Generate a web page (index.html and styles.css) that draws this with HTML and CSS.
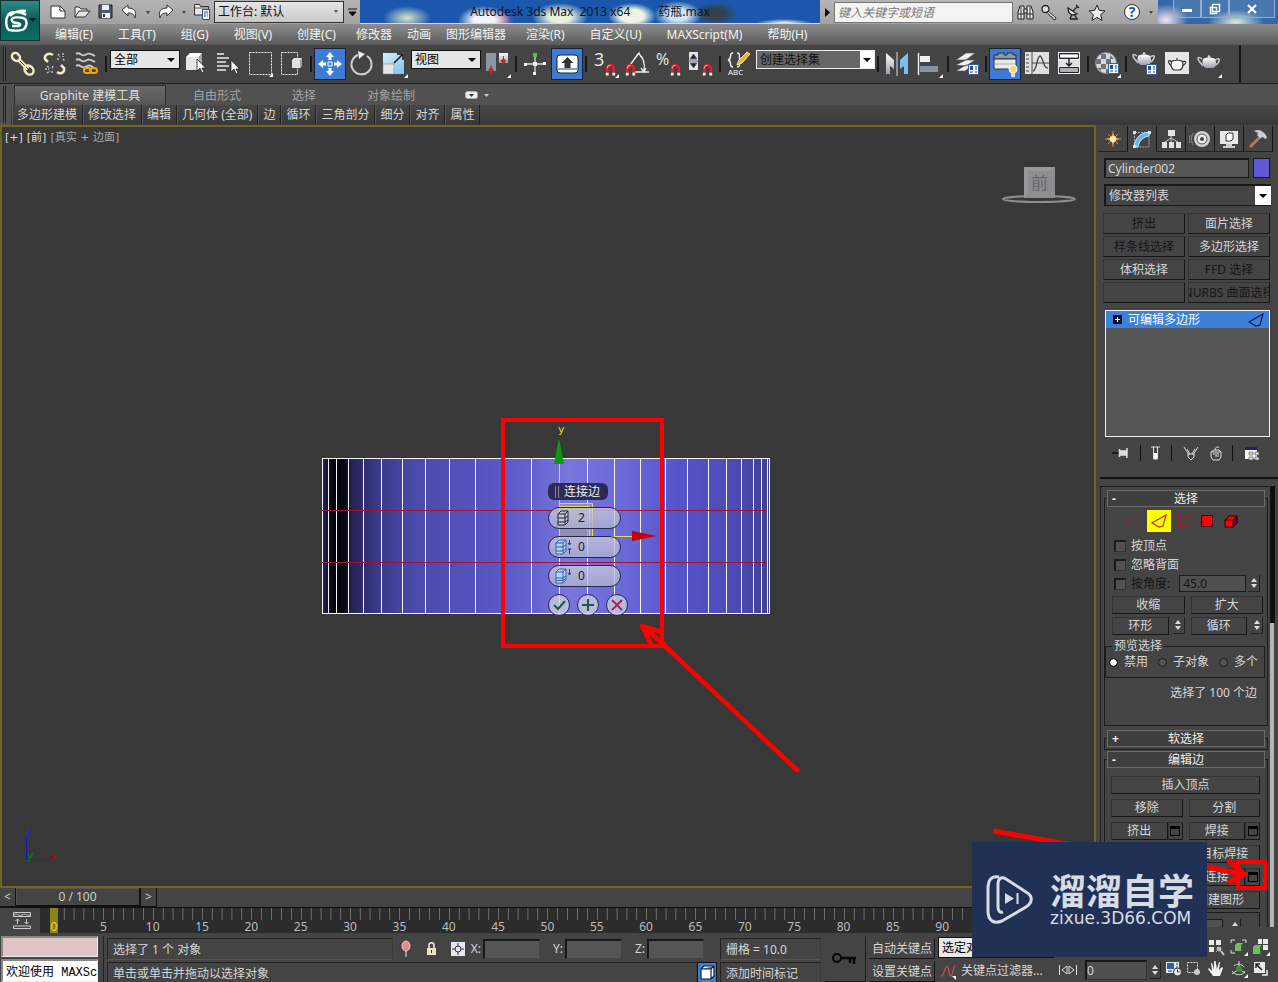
FILE: index.html
```html
<!DOCTYPE html>
<html lang="zh-CN">
<head>
<meta charset="utf-8">
<title>Autodesk 3ds Max 2013 x64 药瓶.max</title>
<link rel="stylesheet" href="styles.css">
</head>
<body>
<svg class="defs" aria-hidden="true">
  <defs>
    <linearGradient id="steel" x1="0" y1="0" x2="0" y2="1"><stop offset="0" stop-color="#fff"/><stop offset="1" stop-color="#9aa0a8"/></linearGradient>
    <linearGradient id="sky" x1="0" y1="0" x2="1" y2="1"><stop offset="0" stop-color="#d6f0fb"/><stop offset="1" stop-color="#7cc4ea"/></linearGradient>
    <symbol id="magnet" viewBox="0 0 10 12"><path d="M2 9V5a3 3 0 0 1 6 0v4" fill="none" stroke="#d3232b" stroke-width="2.6"/><path d="M2 5a3 3 0 0 1 3-3" fill="none" stroke="#f59a9a"/><path d="M.7 9h2.6v2.5H.7zM6.7 9h2.6v2.5H6.7z" fill="#f4f4f4"/></symbol>
    <symbol id="cursor" viewBox="0 0 10 16"><path d="M1 1v12l3-3 2 5 2-1-2-4h3.500z" fill="#fff" stroke="#222" stroke-width=".8"/></symbol>
    <symbol id="flyout" viewBox="0 0 4 4"><path d="M4 0v4H0z" fill="#fff"/></symbol>
    <symbol id="teapot" viewBox="0 0 24 16"><path d="M5 5C1 2 0 4 2 7l4 5M18 6c5-3 6 0 1 5" fill="none" stroke="#c6cacd" stroke-width="1.500"/><path d="M6 5c2-2 10-2 12 0 2 5 1 8-2 9H9C5 12 5 8 6 5z" fill="url(#steel)"/><circle cx="12" cy="2.500" r="1.300" fill="#ddd"/></symbol>
    <symbol id="dialog" viewBox="0 0 11 11"><path d="M.5.5h10v10H.5z" fill="#f5f8fb" stroke="#3c5f8a"/><path d="M2 2h3v4H2z" fill="#1e5296"/><path d="M7 3h2M7 5h2M2 8h3M7 8h2" stroke="#1e5296"/></symbol>
    <symbol id="spin" viewBox="0 0 8 12"><path d="M1 5l3-4 3 4zM1 7l3 4 3-4z" fill="#ddd"/></symbol>
    <symbol id="win" viewBox="0 0 12 12"><path d="M1.500 1.500h9v9h-9z" fill="none" stroke="#000"/><path d="M1 1h10v3H1z" fill="#000"/></symbol>
    <symbol id="edge" viewBox="0 0 16 14"><path d="M1 9L15 1l-3 11-4 1z" fill="none" stroke="currentColor" stroke-width="1.200"/></symbol>
  </defs>
</svg>

<header class="titlebar">
  <button class="appbtn" aria-label="应用程序菜单"><svg width="40" height="41" viewBox="0 0 40 41"><path d="M26 15c-5-4-15-4-18 0-3 5-2 13 1 15 5 1 13 1 15-1 4-4 3-10-1-11-3-1-10-1-11 1-1 3 2 4 5 4 4 0 4 3 1 3h-6M10 16c3-4 10-6 16-5" fill="none" stroke="#fff" stroke-width="2.400"/><path d="M29 18h7l-3.500 4z" fill="#05211f"/></svg></button>
  <div class="quick">
    <button aria-label="新建"><svg width="18" height="16"><path d="M2 2h9l5 5v7H2z" fill="#fff" stroke="#333"/><path d="M11 2v5h5" fill="none" stroke="#333"/></svg></button>
    <button aria-label="打开"><svg width="18" height="16"><path d="M2 13V3h4l2 2h6v2" fill="#eee" stroke="#333"/><path d="M2 13L6 7h11l-5 6z" fill="#e4e8ed" stroke="#333"/></svg></button>
    <button aria-label="保存"><svg width="18" height="16"><path d="M2 1h13v13H2z" fill="#4d5868" stroke="#222"/><path d="M5 1h7v5H5zM5 9h8v5H5z" fill="#eef"/><path d="M6 10h2v3H6z" fill="#333"/></svg></button>
    <button aria-label="撤消"><svg width="18" height="16"><path d="M1 6l6-5v3c6 0 9 3 7 10-1-4-3-5-7-5v3z" fill="#fff" stroke="#333"/></svg></button>
    <i class="tri tiny"></i>
    <button aria-label="重做"><svg width="18" height="16"><path d="M16 6l-6-5v3c-6 0-9 3-7 10 1-4 3-5 7-5v3z" fill="#fff" stroke="#333"/></svg></button>
    <i class="tri tiny"></i>
    <button aria-label="项目文件夹"><svg width="18" height="18"><path d="M1.500 12V1.500h5l1 2h8V12z" fill="#e7e9ec" stroke="#333"/><path d="M1 5h14" stroke="#555"/><path d="M9.500 6.500h7v10h-7z" fill="#f7fbff" stroke="#26508a"/><path d="M11 9h4M11 11h2M14 11h1M11 13h2M14 13h1" stroke="#26508a"/></svg></button>
  </div>
  <span class="drop workspace"><select aria-label="工作台"><option>工作台: 默认</option></select></span>
  <button class="more" aria-label="更多"><svg width="9" height="9"><path d="M0 1h9M1 4h7L4.500 8z" stroke="#111" fill="#111"/></svg></button>
  <h1 class="caption"><span>Autodesk 3ds Max&nbsp; 2013 x64</span><span>药瓶.max</span></h1>
  <div class="info">
    <svg width="6" height="9"><path d="M0 0v9l5-4.500z" fill="#000"/></svg>
    <input class="search" type="search" aria-label="搜索" placeholder="键入关键字或短语">
    <button aria-label="查找"><svg width="17" height="17"><path d="M1 15V8l2-6h4v13zM10 15V2h4l2 6v7z" fill="#eee" stroke="#222"/><path d="M7 5h3v4H7zM1 10h6M10 10h6M4 3v12M13 3v12" fill="#ddd" stroke="#222"/></svg></button>
    <button aria-label="订阅"><svg width="18" height="17"><circle cx="5.500" cy="5" r="3.500" fill="#ddd" stroke="#222" stroke-width="1.300"/><path d="M8 7l8 7-1 2-2-1-1-2-2-1-3-4z" fill="#eee" stroke="#222"/></svg></button>
    <button aria-label="通讯中心"><svg width="16" height="17"><path d="M3 4c0 6 4 8 9 6zM5 15h8M7 10l-2 5M9 10l3 5M8 7l5-5M11 1l3 3" fill="#eee" stroke="#222" stroke-width="1.300"/></svg></button>
    <button aria-label="收藏夹"><svg width="18" height="17"><path d="M9 1l2.300 5.400 5.700.5-4.300 3.800 1.300 5.700L9 13.400l-5 3 1.300-5.700L1 6.900l5.700-.5z" fill="#eee" stroke="#222"/></svg></button>
    <button class="help" aria-label="帮助"><svg width="18" height="18"><circle cx="9" cy="9" r="7.500" fill="#f5f7fa" stroke="#333"/><text x="9" y="14" text-anchor="middle" class="qmark">?</text></svg></button>
    <i class="tri tiny"></i>
  </div>
  <div class="winbtns">
    <button aria-label="最小化"><svg width="12" height="12"><path d="M1 6h10v3H1z" fill="#fff"/></svg></button>
    <button aria-label="还原"><svg width="12" height="12"><path d="M3.500 1.500h7v7h-7zM1.500 4.500h6v6h-6z" fill="#3568a8" stroke="#fff" stroke-width="1.500"/></svg></button>
    <button class="close" aria-label="关闭"><svg width="12" height="12"><path d="M2 2l8 8M10 2l-8 8" stroke="#fff" stroke-width="2.200"/></svg></button>
  </div>
</header>

<nav class="menubar">
  <button>编辑(E)</button><button>工具(T)</button><button>组(G)</button><button>视图(V)</button><button>创建(C)</button><button class="short">修改器</button><button class="short">动画</button><button class="short">图形编辑器</button><button>渲染(R)</button><button>自定义(U)</button><button>MAXScript(M)</button><button>帮助(H)</button>
</nav>

<div class="toolbar">
  <i class="grip"></i>
  <button aria-label="选择并链接"><svg width="28" height="28"><path d="M9 9l10 10" stroke="#eee0ad" stroke-width="4"/><path d="M9 9l10 10" stroke="#4b4533"/><ellipse cx="7" cy="7" rx="4.500" ry="3.500" transform="rotate(45 7 7)" fill="none" stroke="#f1e9c8" stroke-width="2.500"/><ellipse cx="20" cy="20" rx="5" ry="4" transform="rotate(45 20 20)" fill="none" stroke="#f1e9c8" stroke-width="2.500"/></svg></button>
  <button aria-label="断开链接"><svg width="28" height="28"><path d="M12 5C8 2 3 5 4 9l3 3M16 22c4 3 8 0 7-4l-3-3" fill="none" stroke="#f1e9c8" stroke-width="2.500"/><path d="M17 4l2 3M22 3v4M16 9h3M22 9l2 2M4 19h4M6 16l3 2M6 23l3-2M11 21v3M12 16l-1 3" stroke="#bbb" stroke-width="1.500" stroke-dasharray="2 1"/></svg></button>
  <button aria-label="绑定到空间扭曲"><svg width="28" height="28"><path d="M3 4c4-3 5 3 9 1s5-2 10 1M3 10c4-3 5 3 9 1s5-2 10 1M3 16c4-3 5 3 9 1s5-2 8 0" fill="none" stroke="#c9cccf" stroke-width="1.800"/><rect x="11" y="18" width="7" height="5" rx="2.500" fill="#444" stroke="#f6a800" stroke-width="2"/><rect x="17" y="18" width="7" height="5" rx="2.500" fill="none" stroke="#f6a800" stroke-width="2"/></svg></button>
  <i class="sep"></i>
  <span class="drop filter"><select aria-label="选择过滤器"><option>全部</option></select></span>
  <button aria-label="选择对象"><svg width="28" height="28"><path d="M4 7l4-4h12l-3 4z" fill="#fff"/><path d="M4 7h13v13H4z" fill="#e4e7ea"/><path d="M17 7l3-4v13l-3 4z" fill="#9ea4aa"/><use href="#cursor" x="14" y="8" width="10" height="16"/></svg></button>
  <button aria-label="按名称选择"><svg width="28" height="28"><path d="M3 4h7M3 8h12M3 12h9M3 16h12M3 20h9" stroke="#eee" stroke-width="1.500"/><use href="#cursor" x="16" y="9" width="10" height="16"/></svg></button>
  <button aria-label="矩形选择区域"><svg width="28" height="28"><path d="M3.500 2.500h22v22h-22z" fill="none" stroke="#eee" stroke-dasharray="2 1"/><use href="#flyout" x="23" y="23" width="4" height="4"/></svg></button>
  <button aria-label="窗口/交叉"><svg width="28" height="28"><path d="M3.500 2.500h16v22h-16z" fill="none" stroke="#eee" stroke-dasharray="2 1"/><path d="M14 10l2-2h8v8l-2 2h-8z" fill="#dfe2e5"/><path d="M22 10l2-2v8l-2 2z" fill="#9aa0a6"/></svg></button>
  <i class="sep"></i>
  <button class="on" aria-label="选择并移动"><svg width="28" height="28"><path d="M12 12h4v4h-4z" fill="none" stroke="#fff"/><path d="M14 2l4 5h-2.500v3h-3V7H10zM14 26l4-5h-2.500v-3h-3v3H10zM2 14l5-4v2.500h3v3H7V18zM26 14l-5-4v2.500h-3v3h3V18z" fill="#fff"/></svg></button>
  <button aria-label="选择并旋转"><svg width="28" height="28"><path d="M19 6A10 10 0 1 1 10 5" fill="none" stroke="#cfd2d5" stroke-width="2"/><path d="M10 1l7 3-6 5z" fill="#eee"/></svg></button>
  <button aria-label="选择并缩放"><svg width="28" height="28"><path d="M3 3h21v21H3z" fill="url(#sky)"/><path d="M3 14h11v10H3z" fill="#e4e6e8" stroke="#888" stroke-width=".6"/><path d="M14 13l8-8M17 4h6v6" fill="none" stroke="#111" stroke-width="1.500"/><use href="#flyout" x="24" y="24" width="4" height="4"/></svg></button>
  <span class="drop filter"><select aria-label="参考坐标系"><option>视图</option></select></span>
  <button aria-label="使用轴点中心"><svg width="28" height="28"><path d="M3 3h10v18H3z" fill="#8d97a4"/><path d="M16 3h9v10h-9z" fill="url(#steel)"/><path d="M8 17l3 3-3 3-3-3zM20.500 8l3 3-3 3-3-3z" fill="#c2272b"/><path d="M8 15v9M20.500 6v9" stroke="#c2272b"/><use href="#flyout" x="24" y="24" width="4" height="4"/></svg></button>
  <i class="sep"></i>
  <button aria-label="选择并操纵"><svg width="28" height="28"><path d="M14 4v20M4 14h20" stroke="#ddd" stroke-width="1.300"/><path d="M12 12h4v4h-4zM3 13h3v3H3zM22 12h3v3h-3zM12 22h3v3h-3z" fill="#f4f4f4"/><path d="M12 3h4v4h-4z" fill="#62b84a"/></svg></button>
  <button class="on" aria-label="键盘快捷键覆盖切换"><svg width="28" height="28"><rect x="4" y="5" width="21" height="18" rx="3" fill="#fff" stroke="#222"/><path d="M5 19h19" stroke="#8ba2bd" stroke-width="2"/><path d="M14.500 7l6 6h-3v5h-6v-5h-3z" fill="#333"/></svg></button>
  <i class="sep"></i>
  <button aria-label="捕捉开关"><svg width="28" height="28"><text x="3" y="16" class="glyph">3</text><use href="#magnet" x="14" y="13" width="11" height="13"/><use href="#flyout" x="24" y="24" width="4" height="4"/></svg></button>
  <button aria-label="角度捕捉"><svg width="28" height="28"><path d="M5 18L15 4M10 22h16M16 4c5 4 6 10 5 17M13 7l3-4 2 4M18 18l3 4 2-4" fill="none" stroke="#eee" stroke-width="1.300"/><use href="#magnet" x="2" y="13" width="11" height="13"/></svg></button>
  <button aria-label="百分比捕捉"><svg width="28" height="28"><text x="1" y="15" class="glyph small">%</text><use href="#magnet" x="15" y="13" width="11" height="13"/></svg></button>
  <button aria-label="微调器捕捉"><svg width="28" height="28"><path d="M2 2h9v18H2z" fill="#dfe4ea"/><path d="M2 11h9M3 9l3.500-5L10 9zM3 13l3.500 5 3.500-5z" fill="#222" stroke="#667"/><use href="#magnet" x="15" y="13" width="11" height="13"/></svg></button>
  <i class="sep"></i>
  <button aria-label="编辑命名选择集"><svg width="28" height="28"><path d="M8 3C3 3 8 9 3 10c5 1 0 7 5 7M12 3c5 0 0 6 4 7-4 1 1 7-4 7" fill="none" stroke="#eee" stroke-width="1.400"/><path d="M12 15l2-5 8-8 3 2-8 9z" fill="#f1b52b" stroke="#fbe6a5"/><text x="3" y="25" class="abc">ABC</text></svg></button>
  <span class="drop named"><select aria-label="命名选择集"><option>创建选择集</option></select></span>
  <i class="sep"></i>
  <button aria-label="镜像"><svg width="28" height="28"><path d="M3 3l8 7v9l-4-3v8H3z" fill="url(#steel)"/><path d="M25 3l-8 7v9l4-3v8h4z" fill="#7bc3e6"/><path d="M14 2v24" stroke="#ddd"/></svg></button>
  <button aria-label="对齐"><svg width="28" height="28"><path d="M3.500 3v22" stroke="#eee" stroke-width="1.500"/><path d="M5 6h10v6H5z" fill="#f2f2f2"/><path d="M5 16h18v6H5z" fill="#8993a1"/><use href="#flyout" x="24" y="24" width="4" height="4"/></svg></button>
  <i class="sep"></i>
  <button aria-label="层管理器"><svg width="28" height="28"><path d="M3 10l10-7h9l-9 7zM3 15l10-5h9l-9 6zM3 21l10-6h7l-8 6z" fill="#f1f1f1" stroke="#555" stroke-width=".7"/><use href="#dialog" x="15" y="14" width="11" height="11"/></svg></button>
  <i class="sep"></i>
  <button class="on" aria-label="功能区"><svg width="28" height="28"><path d="M3 9V5h4V3h6v2h3V3h6v2h3v4z" fill="#8d99a6" stroke="#333"/><path d="M3 9h22v10H3z" fill="#e8ebee" stroke="#333"/><path d="M4 14h20" stroke="#aab"/><circle cx="22" cy="19" r="4" fill="#ffd76b" stroke="#fff"/><path d="M20 23h4v4h-4z" fill="#ddd"/></svg></button>
  <button aria-label="曲线编辑器"><svg width="28" height="28"><path d="M2 2h24v22H2z" fill="#dfe1e3"/><path d="M9 2v22M3 5h3M3 9h3M3 13h3M3 17h3M3 21h3M9 13h17" stroke="#444"/><path d="M10 21c4-1 4-15 7-15s3 13 8 12" fill="none" stroke="#444" stroke-width="1.300"/></svg></button>
  <button aria-label="图解视图"><svg width="28" height="28"><path d="M3 2h22v22H3z" fill="#f0f0f0"/><path d="M4.500 3.500h19v5h-19zM4.500 17.500h19v5h-19z" fill="#a9b0b8" stroke="#222"/><path d="M5 5h18v2H5z" fill="#fff"/><path d="M3 10h22v6H3z" fill="#dfe2e5"/><path d="M14 9v7M11 13l3 3 3-3" fill="none" stroke="#222" stroke-width="1.500"/></svg></button>
  <i class="sep"></i>
  <button aria-label="材质编辑器"><svg width="28" height="28"><circle cx="13" cy="13" r="10.500" fill="#d6d9dc" stroke="#888"/><path d="M8 4h5v5H8zM17 5l4 4h-4zM3 9h5v5H3zM13 9h5v5h-5zM8 14h5v5H8zM18 14h5v4h-5zM4 18h4v3zM13 19h5v4h-5z" fill="#6d747c"/><use href="#dialog" x="15" y="13" width="11" height="11"/><use href="#flyout" x="24" y="24" width="4" height="4"/></svg></button>
  <i class="sep"></i>
  <button aria-label="渲染设置"><svg width="28" height="28"><use href="#teapot" x="1" y="1" width="24" height="16"/><use href="#dialog" x="15" y="14" width="11" height="11"/></svg></button>
  <button aria-label="渲染帧窗口"><svg width="28" height="28"><path d="M2 2h24v22H2z" fill="#e4e6e8"/><path d="M9 11c2-1 8-1 10 0 2 4 1 7-2 9h-6c-3-2-4-5-2-9zM9 12c-4-3-5-1-1 4M19 12c5-2 5 1 0 4M14 8v2" fill="#f8f8f8" stroke="#333" stroke-width="1.200"/></svg></button>
  <button aria-label="渲染产品"><svg width="28" height="28"><use href="#teapot" x="2" y="4" width="24" height="16"/><use href="#flyout" x="23" y="24" width="4" height="4"/></svg></button>
</div>

<section class="ribbon">
  <i class="grip"></i>
  <div class="ribbonbody">
    <div class="tabs"><button class="active">Graphite 建模工具</button><button>自由形式</button><button>选择</button><button>对象绘制</button><svg width="24" height="9"><rect x=".5" y=".5" width="12" height="7" rx="2" fill="#eee" stroke="#aaa"/><path d="M4 3h5L6.500 6z" fill="#333"/><path d="M19 3h5l-2.500 3z" fill="#ccc"/></svg></div>
    <div class="panels"><button>多边形建模</button><button>修改选择</button><button>编辑</button><button>几何体 (全部)</button><button>边</button><button>循环</button><button>三角剖分</button><button>细分</button><button>对齐</button><button>属性</button></div>
  </div>
</section>

<main class="workspace-grid">
  <div class="left">
    <section class="viewport">
      <div class="vplabel"><span>[+]</span><span>[前]</span><span class="dim">[真实 + 边面]</span></div>
      <svg class="scene" aria-label="前视图">
        <defs><linearGradient id="body"><stop offset="0" stop-color="#2b2957"/><stop offset=".015" stop-color="#101022"/><stop offset=".03" stop-color="#020204"/><stop offset=".05" stop-color="#080814"/><stop offset=".065" stop-color="#242150"/><stop offset=".12" stop-color="#3a3886"/><stop offset=".2" stop-color="#4b49a9"/><stop offset=".36" stop-color="#5754bf"/><stop offset=".47" stop-color="#6462cd"/><stop offset=".55" stop-color="#7876dc"/><stop offset=".68" stop-color="#6a68d8"/><stop offset=".8" stop-color="#5553c8"/><stop offset=".92" stop-color="#4d4bb6"/><stop offset="1" stop-color="#403e92"/></linearGradient></defs>
        <g transform="translate(-2 -127)">
          <path d="M322 458h448v155H322z" fill="url(#body)"/>
          <path d="M322 458.500h448M322 613.500h448M322.500 458v155M328.500 458v155M336.500 458v155M348.500 458v155M363.500 458v155M381.500 458v155M402.500 458v155M425.500 458v155M449.500 458v155M475.500 458v155M502.500 458v155M531.500 458v155M559.500 536v77M587.500 458v155M614.500 458v155M640.500 458v155M665.500 458v155M687.500 458v155M708.500 458v155M726.500 458v155M741.500 458v155M753.500 458v155M761.500 458v155M767.500 458v155M769.500 458v155" stroke="#f4f4ff" fill="none"/>
          <path d="M321 510.500h446M321 562.500h446" stroke="#a01235"/>
          <path d="M559 503h34v33h-34z" fill="#9a98a0" opacity=".75"/>
          <path d="M559.500 464v72M559 503.500h33.500v33M560 506.500h29.500v30M593 536.500h40" stroke="#e4dc55" fill="none"/>
          <path d="M559 438l5 26h-10z" fill="#0a9a0a"/><path d="M632 531l25 5-25 5z" fill="#c40000"/>
          <text x="558" y="433" class="ax" fill="#dede28">y</text>
          <path d="M503 420h159v226H503z" fill="none" stroke="#fe0000" stroke-width="4"/>
          <path d="M797 770L650 632M642 626l20 6M642 626l10 20M642 626l22 18" fill="none" stroke="#fe0000" stroke-width="4.500" stroke-linecap="round"/>
        </g>
      </svg>
      <form class="caddy">
        <div class="caddytitle"><i></i>连接边</div>
        <label class="pill"><svg width="20" height="18"><path d="M4 5l3-3h7v11l-3 3H4zM4 5h7l3-3M11 5v11M4 9h7l3-2M4 13h7l3-2" fill="#d5e5fb" fill-opacity=".4" stroke="#222"/></svg><input aria-label="分段" value="2"></label>
        <label class="pill"><svg width="20" height="18"><path d="M2 5l3-3h7v11l-3 3H2zM2 5h7l3-3M9 5v11M2 9h7l3-2M2 13h7l3-2" fill="#b5dafd" stroke="#3161a6"/><path d="M15.500 2v5M14 5l1.500 2L17 5M15.500 16v-5M14 12l1.500-2 1.500 2" fill="none" stroke="#1f478b"/></svg><input aria-label="收缩" value="0"></label>
        <label class="pill"><svg width="20" height="18"><path d="M2 5l3-3h7v11l-3 3H2zM2 5h7l3-3M9 5v11M2 11h7l3-2M2 13.500h7l3-2" fill="#b5dafd" stroke="#3161a6"/><path d="M15.500 2v6M14 6l1.500 2L17 6" fill="none" stroke="#1f478b"/></svg><input aria-label="滑块" value="0"></label>
        <div class="caddybtns"><button type="button" aria-label="确定"><svg width="14" height="14"><path d="M2 7l4 4 7-8" fill="none" stroke="#1d5a3a" stroke-width="2"/></svg></button><button type="button" aria-label="应用并继续"><svg width="14" height="14"><path d="M7 1v12M1 7h12" stroke="#1d5a3a" stroke-width="2"/></svg></button><button type="button" aria-label="取消"><svg width="14" height="14"><path d="M2 2l10 10M12 2L2 12" stroke="#a2285a" stroke-width="2"/></svg></button></div>
      </form>
      <svg class="cube" width="78" height="42"><ellipse cx="38" cy="33" rx="36" ry="3" fill="none" stroke="#8b8e90" stroke-width="2"/><path d="M23 1h31v31H23z" fill="#8c8e90"/><path d="M23 1h31l-4 4H27v23l-4 4z" fill="#a0a2a4" opacity=".5"/><text x="30" y="23" class="cubetext">前</text></svg>
      <svg class="axes" width="40" height="40"><path d="M4.500 14v22" stroke="#1414b4"/><path d="M4 35.500h24" stroke="#a80000"/><text x="4" y="11" class="ax" fill="#2222dd">z</text><text x="5" y="35" class="ax" fill="#008a00">y</text><text x="28" y="36" class="ax" fill="#b80000">x</text></svg>
    </section>
    <div class="slider"><button aria-label="上一帧">&lt;</button><button class="thumb">0 / 100</button><button aria-label="下一帧">&gt;</button></div>
    <div class="trackbar">
      <button class="curvebtn" aria-label="打开迷你曲线编辑器"><svg width="18" height="17"><path d="M.5.5h17v4H.5zM.5 14h17v2.500H.500zM1 3c4-3 4 2 8 0s4 1 8 0M4.500 7v5M2.500 9l2-2 2 2M13.500 7v5M11.500 10l2 2 2-2" fill="none" stroke="#ccc"/></svg></button>
      <div class="ticks">
        <div class="first"><span>0</span></div><div><span>5</span></div><div><span>10</span></div><div><span>15</span></div><div><span>20</span></div><div><span>25</span></div><div><span>30</span></div><div><span>35</span></div><div><span>40</span></div><div><span>45</span></div><div><span>50</span></div><div><span>55</span></div><div><span>60</span></div><div><span>65</span></div><div><span>70</span></div><div><span>75</span></div><div><span>80</span></div><div><span>85</span></div><div><span>90</span></div><div><span>95</span></div>
      </div>
    </div>
  </div>

  <aside class="command">
    <div class="cmdtabs">
      <button aria-label="创建"><svg width="20" height="20"><path d="M10 2v16M2 10h16M5 5l10 10M15 5L5 15" stroke="#e08a2e"/><path d="M10 4l2 4 4 2-4 2-2 4-2-4-4-2 4-2z" fill="#f5a742"/><circle cx="10" cy="10" r="3" fill="#fff1c0"/></svg></button>
      <button class="sel" aria-label="修改"><svg width="22" height="20"><path d="M3.500 18V3.500H18V18z" fill="none" stroke="#aaa" stroke-dasharray="2 1"/><path d="M3 18C4 9 9 4 18 3v4c-6 1-10 5-11 11z" fill="#64b5ea" stroke="#c4ebff"/><path d="M2 2h3v3H2zM2 16h3v3H2zM17 2h3v3h-3z" fill="#ddd"/></svg></button>
      <button aria-label="层次"><svg width="20" height="20"><path d="M7 1h7v6H7zM1 13h5v6H1zM8 13h5v6H8zM15 13h5v6h-5z" fill="#e1e3e6"/><path d="M10 7v6M10 9l-6 4M10 9l7 4" stroke="#ccc"/></svg></button>
      <button aria-label="运动"><svg width="22" height="20"><circle cx="13" cy="10" r="8" fill="#cfd2d5"/><circle cx="13" cy="10" r="5" fill="#e9ebed" stroke="#555"/><circle cx="13" cy="10" r="2" fill="#444"/><path d="M4 4c-2 4-2 8 0 12M1 6c-1 3-1 5 0 8" fill="none" stroke="#888"/></svg></button>
      <button aria-label="显示"><svg width="20" height="20"><path d="M1 2h18v13H1z" fill="#e6e8ea"/><path d="M7 15h6v2h3v2H4v-2h3z" fill="#ccc"/><path d="M7 6l2-2h5v6l-2 2H7z" fill="#fff" stroke="#333"/></svg></button>
      <button aria-label="实用程序"><svg width="20" height="20"><path d="M2 18L13 7" stroke="#b47768" stroke-width="3"/><path d="M6 2c4-2 8-1 12 4l1 3-2 1-2-2-3 1-3-3 1-2z" fill="#c8ccd0"/></svg></button>
    </div>
    <div class="namerow"><input aria-label="对象名称" value="Cylinder002"><button aria-label="对象颜色"></button></div>
    <span class="drop modlist"><select aria-label="修改器列表"><option>修改器列表</option></select></span>
    <div class="modbtns"><button disabled>挤出</button><button>面片选择</button><button disabled>样条线选择</button><button>多边形选择</button><button>体积选择</button><button disabled>FFD 选择</button><button disabled aria-label="空"></button><button disabled>NURBS 曲面选择</button></div>
    <div class="stack"><div class="stackrow"><svg width="9" height="9"><path d="M0 0h9v9H0z" fill="#081030"/><path d="M2 4.500h5M4.500 2v5" stroke="#fff"/></svg><span>可编辑多边形</span><svg class="edgeicon" width="16" height="14"><use href="#edge"/></svg></div></div>
    <div class="stacktools">
      <button aria-label="锁定堆栈"><svg width="17" height="12"><path d="M0 6h7" stroke="#111" stroke-width="1.500"/><path d="M7.500 2v8M15 1v10M8 4h6v4H8z" fill="#ddd" stroke="#ddd" stroke-width="1.500"/></svg></button><i></i>
      <button aria-label="显示最终结果"><svg width="9" height="14"><path d="M0 1h9M2.500 1v12h4V1" fill="none" stroke="#ddd"/><path d="M3 7h3v6H3z" fill="#fff"/></svg></button><i></i>
      <button aria-label="使唯一"><svg width="16" height="15"><path d="M1 1l5 8M15 1l-5 8M4 3l3 5M12 3L9 8M5 8h6v3l-3 3-3-3z" fill="none" stroke="#ddd"/></svg></button>
      <button aria-label="移除修改器"><svg width="12" height="15"><path d="M1 6h10v5l-2 3H3l-2-3zM1 6l3-2h5l2 2M5 4c0-3 3-4 4-2M3 8h6M5 10h4" fill="none" stroke="#ddd"/></svg></button><i></i>
      <button aria-label="配置修改器集"><svg width="16" height="15"><path d="M1 1h12v12H1z" fill="#fff"/><path d="M1 1h12v3H1z" fill="#1b1b9a"/><path d="M5 6h4v3H5zM11 6h4v3h-4zM5 11h4v3H5zM11 11h4v3h-4z" fill="#ddd" stroke="#555" stroke-width=".7"/></svg></button>
    </div>
    <div class="rollarea">
      <div class="rolls">
        <section class="rollout">
          <h2><b>-</b>选择</h2>
          <div class="subobj">
            <button aria-label="顶点"><svg width="14" height="14"><path d="M1 7h2M5 12h2M7 4h2M11 1h2M11 9h2" stroke="#b51c1c" stroke-width="1.500"/></svg></button>
            <button class="sel" aria-label="边"><svg width="16" height="14"><use href="#edge"/></svg></button>
            <button aria-label="边界"><svg width="14" height="14"><path d="M3 2c4-2 9 0 9 5s-5 7-9 5c-2-1-2-3 1-4 1-1 1-2-1-3s-1-2 0-3z" fill="none" stroke="#a31b1b" stroke-width="1.500"/></svg></button>
            <button aria-label="多边形"><svg width="12" height="12"><path d="M.500.500h11v11H.5z" fill="#f00" stroke="#400"/></svg></button>
            <button aria-label="元素"><svg width="14" height="13"><path d="M1 5l4-4h8v7l-4 4H1z" fill="#f00" stroke="#300"/><path d="M9 5l4-4v7l-4 4z" fill="#700050" stroke="#300"/><path d="M1 5h8" stroke="#300"/></svg></button>
          </div>
          <label class="check"><input type="checkbox">按顶点</label>
          <label class="check"><input type="checkbox">忽略背面</label>
          <div class="anglerow"><label class="check off"><input type="checkbox" disabled>按角度:</label><input class="angle" aria-label="角度" value="45.0" disabled><button class="spin" aria-label="调整角度"><svg width="8" height="12"><use href="#spin"/></svg></button></div>
          <div class="pair"><button class="btn">收缩</button><button class="btn">扩大</button></div>
          <div class="pair"><div class="combo"><button class="btn">环形</button><button class="spin" aria-label="调整环形"><svg width="8" height="12"><use href="#spin"/></svg></button></div><div class="combo"><button class="btn">循环</button><button class="spin" aria-label="调整循环"><svg width="8" height="12"><use href="#spin"/></svg></button></div></div>
          <fieldset><legend>预览选择</legend><label><input type="radio" name="preview" checked>禁用</label><label><input type="radio" name="preview">子对象</label><label><input type="radio" name="preview">多个</label></fieldset>
          <p class="count">选择了 100 个边</p>
        </section>
        <section class="rollout closed"><h2><b>+</b>软选择</h2></section>
        <section class="rollout edges">
          <h2><b>-</b>编辑边</h2>
          <button class="btn">插入顶点</button>
          <div class="pair"><button class="btn">移除</button><button class="btn">分割</button></div>
          <div class="pair"><div class="combo tight"><button class="btn">挤出</button><button class="btn set" aria-label="挤出设置"><svg width="12" height="12"><use href="#win"/></svg></button></div><div class="combo tight"><button class="btn">焊接</button><button class="btn set" aria-label="焊接设置"><svg width="12" height="12"><use href="#win"/></svg></button></div></div>
          <div class="pair"><button class="btn" aria-label="桥"></button><button class="btn">目标焊接</button></div>
          <div class="pair"><button class="btn" aria-label="切角"></button><div class="combo tight"><button class="btn">连接</button><button class="btn set" aria-label="连接设置"><svg width="12" height="12"><use href="#win"/></svg></button></div></div>
          <button class="btn shape">创建图形</button>
          <div class="weight"><input aria-label="权重"><button class="spin" aria-label="调整权重"><svg width="8" height="12"><use href="#spin"/></svg></button></div>
        </section>
      </div>
      <div class="scrollbar"><i></i></div>
    </div>
  </aside>
</main>

<footer class="status">
  <div class="listener"><output aria-label="宏录制器"></output><input aria-label="侦听器" value="欢迎使用 MAXScript"></div>
  <div class="prompts">
    <div class="prow"><p class="well grow">选择了 1 个 对象</p>
      <button aria-label="孤立当前选择"><svg width="10" height="18"><ellipse cx="5" cy="6" rx="4" ry="5" fill="#e68a90" stroke="#f8c4c4"/><path d="M5 11v6" stroke="#eee"/></svg></button>
      <button aria-label="选择锁定"><svg width="11" height="14"><path d="M3 6V3c0-3 5-3 5 0v3" fill="none" stroke="#eee" stroke-width="1.500"/><path d="M1 6h9v7H1z" fill="#e9e3bd"/><path d="M5.500 8v3" stroke="#333"/></svg></button>
      <button aria-label="绝对模式"><svg width="14" height="14"><path d="M0 0h14v14H0z" fill="#e2e8f2"/><circle cx="7" cy="7" r="3" fill="none" stroke="#333"/><path d="M7 1v3M7 10v3M1 7h3M10 7h3" stroke="#333"/></svg></button>
      <label>X:<input></label><label>Y:<input></label><label>Z:<input></label></div>
    <div class="prow"><p class="well grow">单击或单击并拖动以选择对象</p><button class="degrade" aria-label="自适应降级"><svg width="16" height="16"><path d="M2 4l3-3h10v10l-3 3H2zM2 4h10l3-3M12 4v10" fill="#fff" stroke="#123" stroke-width="1.200"/></svg></button></div>
  </div>
  <div class="gridcol"><p class="well">栅格 = 10.0</p><button class="well">添加时间标记</button></div>
  <button class="keybtn" aria-label="设置关键点"><svg width="26" height="14"><circle cx="5" cy="6" r="4" fill="none" stroke="#050505" stroke-width="2"/><path d="M9 6h15M18 6v5M22 6v6" stroke="#050505" stroke-width="2.500"/></svg></button>
  <div class="autocol"><button>自动关键点</button><button>设置关键点</button></div>
  <div class="filtercol"><span class="drop seldrop"><select aria-label="选定对象"><option>选定对象</option></select></span><div class="filterrow"><svg width="16" height="17"><path d="M1 13c3 1 4-10 6-10s2 11 4 10 2-8 4-11" fill="none" stroke="#c34b5b" stroke-width="1.300"/><path d="M12 13h4v4z" fill="#fff"/></svg><button>关键点过滤器...</button></div></div>
  <div class="playcol"><div class="playrow"><button aria-label="关键点模式切换"><svg width="18" height="10"><path d="M.500 0v10M17.500 0v10M8 1v8L3 5zM10 1v8l5-4z" fill="none" stroke="#ddd"/></svg></button><input aria-label="当前帧" value="0"><button class="spin" aria-label="调整帧"><svg width="8" height="12"><use href="#spin"/></svg></button></div></div>
  <div class="navgrid">
    <i></i><i></i>
    <button aria-label="缩放所有视图"><svg width="18" height="18"><path d="M2 2h5v5H2zM9 2h5v5H9zM2 9h5v5H2zM9 9h3v5H9z" fill="#e7e9eb"/><circle cx="12" cy="11" r="3" fill="#bbb" stroke="#444"/><path d="M14 13l3 4" stroke="#ccc" stroke-width="2"/></svg></button>
    <button aria-label="最大化显示"><svg width="18" height="18"><path d="M1 5V2h4M12 2h4v3M1 12v3h4" fill="none" stroke="#ddd"/><path d="M5 7l2-2h6v6l-2 2H5z" fill="#7bb567"/><path d="M11 7l2-2v6l-2 2z" fill="#2e6320"/><use href="#flyout" x="14" y="14" width="4" height="4"/></svg></button>
    <button aria-label="所有视图最大化显示"><svg width="18" height="18"><path d="M6 1h4v5H6zM11 1h5v5h-5zM11 7h5v5h-5z" fill="#e7e9eb"/><path d="M1 9l2-2h7v6l-2 3H1z" fill="#7bb567"/><path d="M8 9l2-2v6l-2 3z" fill="#2e6320"/><use href="#flyout" x="14" y="14" width="4" height="4"/></svg></button>
    <button aria-label="时间配置"><svg width="18" height="18"><path d="M1 2h13v11H1z" fill="#e5eaf0"/><path d="M2 3h7v6H2z" fill="#2c5fa3"/><path d="M11 4h2M11 7h2M3 11h4" stroke="#234"/><circle cx="12.500" cy="12" r="4" fill="#eee" stroke="#333"/><path d="M12.500 9.500V12h2" fill="none" stroke="#222"/></svg></button>
    <button aria-label="缩放区域"><svg width="18" height="18"><path d="M2.500 2.500h10v10h-10z" fill="none" stroke="#ddd" stroke-dasharray="2 1"/><circle cx="12" cy="12" r="3" fill="#ccc"/></svg></button>
    <button aria-label="平移视图"><svg width="18" height="18"><path d="M6 16L1 9l1-1 3 3-1-8h1l2 6V1h1.500L10 9l2-7h1l-1 8 3-3 1 1-3 8z" fill="#f1f1f1"/></svg></button>
    <button aria-label="环绕"><svg width="18" height="18"><path d="M9 9V1M9 9l-7 5M9 9l6 4" stroke="#ddd"/><path d="M2 11c3 5 11 5 13 0M4 6c3-3 8-2 10 1" fill="none" stroke="#bde0ac"/><circle cx="9" cy="9" r="3" fill="#4b8b3a"/><use href="#flyout" x="14" y="14" width="4" height="4"/></svg></button>
    <button aria-label="最大化视口切换"><svg width="18" height="18"><path d="M2 2h11v11H2z" fill="#e7e9eb"/><path d="M4 4l6 6M4 8V4h4" fill="none" stroke="#222" stroke-width="1.500"/><path d="M15 10v5h-5" fill="none" stroke="#eee" stroke-width="1.500"/></svg></button>
  </div>
</footer>

<div class="overlay">
  <svg width="306" height="162"><path d="M21 11l80 14M230 46l40 8" fill="none" stroke="#fe0000" stroke-width="5"/><path d="M256 40l16 14-16 9" fill="none" stroke="#fe0000" stroke-width="5"/><path d="M264 48l12 6-12 6z" fill="#fe0000"/><path d="M266 42h27v26h-27z" fill="none" stroke="#fe0000" stroke-width="4"/></svg>
  <div class="brand">
    <svg width="50" height="52"><path d="M14 3c-9-2-11 5-11 12v22c0 10 6 13 14 10l24-14c7-5 7-11 0-15L21 5c-5-3-8 0-8 5v23c0 4 2 6 5 5" fill="none" stroke="#d7dbe3" stroke-width="3"/><path d="M20 19v11l9-5.500z" fill="#d7dbe3"/><path d="M32.500 19v11" stroke="#d7dbe3" stroke-width="2"/></svg>
    <div><strong>溜溜自学</strong><span>zixue.3D66.COM</span></div>
  </div>
</div>
</body>
</html>
```
FILE: styles.css
```css
* { box-sizing: border-box; }
body { margin: 0; height: 100vh; display: flex; flex-direction: column; overflow: hidden; position: relative; background: #444; color: #d6d6d6; font: 12px/16px "Noto Sans", "Noto Sans CJK SC", sans-serif; }
button, input, select { font: inherit; color: inherit; margin: 0; padding: 0; border: 0; background: none; border-radius: 0; min-width: 0; }
button { display: flex; align-items: center; justify-content: center; white-space: nowrap; flex: none; }
p, h1, h2 { margin: 0; font: inherit; }
svg { display: block; flex: none; }
.defs { position: absolute; width: 0; height: 0; }
.glyph { font: 18px/18px "Open Sans", sans-serif; fill: #ececec; }
.glyph.small { font-size: 16px; }
.abc { font: 8px "Open Sans", sans-serif; fill: #fff; }
.qmark { font: bold 14px "Open Sans", sans-serif; fill: #1d55ae; }
.ax { font: 11px "DejaVu Sans", sans-serif; }
.tri { width: 0; height: 0; border: 4px solid transparent; border-top-color: #111; border-bottom: 0; }
.tri.tiny { border-width: 2px; border-top-width: 3px; border-top-color: #444; border-bottom: 0; margin: 0 7px; }

.drop { position: relative; display: flex; flex: none; }
.drop select { appearance: none; width: 100%; height: 100%; padding-left: 3px; }
.drop::after { content: ""; position: absolute; right: 4px; top: 50%; margin-top: -2px; border: 4px solid transparent; border-top-color: #000; border-bottom: 0; pointer-events: none; }

.titlebar { height: 24px; flex: none; display: flex; align-items: stretch; background: linear-gradient(#b5b5b5, #a2a2a2); position: relative; }
.appbtn { position: absolute; left: 0; top: 0; width: 40px; height: 41px; background: linear-gradient(#2f8d86, #0b5a55 50%, #0a6f66); border: 1px solid #14302e; z-index: 2; }
.quick { display: flex; align-items: center; padding-left: 46px; width: 214px; flex: none; }
.quick button { width: 24px; }
.quick .tri { margin: 0 4px; }
.workspace { width: 130px; margin: 1px 0 1px; height: 22px; border: 1px solid #333; background: linear-gradient(#e6e6e6, #c9c9c9); color: #111; }
.workspace::after { border-width: 2px; border-top-width: 3px; right: 5px; border-bottom: 0; border-top-color: #555; }
.more { width: 16px; }
.caption { flex: 1; display: flex; gap: 28px; justify-content: center; align-items: center; color: #0c1420; border-bottom: 1px solid #c9dcf0; white-space: nowrap; overflow: hidden;
  background: radial-gradient(ellipse 24px 12px at 47px 18px, #d9e8c6, transparent), radial-gradient(ellipse 26px 14px at 124px 20px, #f1f5fc 40%, transparent), radial-gradient(ellipse 18px 10px at 137px 20px, #dc6a88, transparent), radial-gradient(ellipse 28px 14px at 200px 17px, #e5efd9 40%, transparent), radial-gradient(ellipse 24px 13px at 272px 16px, #eef4e3 50%, transparent), radial-gradient(ellipse 24px 14px at 318px 15px, #d5e5f8 40%, transparent), radial-gradient(ellipse 24px 12px at 355px 14px, #33424f 40%, transparent), radial-gradient(ellipse 28px 4px at 424px 23px, #fff, transparent), #1b58ad; }
.info { display: flex; align-items: center; padding-left: 5px; width: 338px; flex: none; }
.search { width: 180px; height: 21px; background: #f3f3f3; border: 1px solid #777; padding-left: 3px; font-style: italic; margin-left: 3px; appearance: none; }
.search::placeholder { color: #777; opacity: 1; }
.info button { width: 24px; }
.info .help { margin-left: 11px; }
.info .tri { margin: 0 5px; }
.winbtns { width: 120px; display: flex; padding-left: 15px; align-items: flex-start; background: radial-gradient(ellipse 22px 16px at 8px 20px, #f4e4ee, transparent), radial-gradient(ellipse 28px 12px at 78px 22px, #dcebe0, transparent), #3568a8; }
.winbtns button { width: 28px; height: 18px; border: 1px solid #8fb0d6; border-top: 0; background: rgba(255,255,255,.1); }
.winbtns .close { width: 46px; }

.menubar { height: 21px; flex: none; display: flex; gap: 1px; padding-left: 43px; background: linear-gradient(#8d8d8d, #5a5a5a); color: #f2f2f2; }
.menubar button { padding: 0 12px; }
.menubar .short { padding: 0 7px; }

.toolbar { height: 39px; flex: none; display: flex; align-items: center; background: #444; border-bottom: 1px solid #1c1c1c; }
.toolbar::after { content: ""; align-self: stretch; margin-left: 14px; border-left: 2px solid #151515; }
.toolbar > button { width: 32px; height: 32px; }
.toolbar .on { background: #3d7bd6; border: 1px solid #16233a; }
.toolbar .drop { margin: 5px 0 0 1px; }
.grip { width: 7px; flex: none; align-self: stretch; margin: 2px 0; background: linear-gradient(90deg, transparent 3px, #1e1e1e 3px 4px, #555 4px 5px, #1e1e1e 5px 6px, transparent 6px); }
.sep { width: 6px; height: 16px; flex: none; background: linear-gradient(90deg, transparent 2px, #191919 2px 4px, transparent 4px); }
.filter { width: 70px; height: 19px; align-self: flex-start; background: #e6e6e6; color: #000; border: 1px solid #111; }
.named { width: 119px; height: 19px; align-self: flex-start; background: linear-gradient(90deg, #666 103px, #fff 103px); color: #111; border: 1px solid #eee; }
.named::after { right: 3px; }

.ribbon { flex: none; height: 41px; display: flex; background: #515151; }
.ribbonbody { flex: 1; padding-left: 4px; display: flex; flex-direction: column; }
.tabs { height: 20px; display: flex; align-items: stretch; color: #a3a3a3; padding-left: 3px; margin-top: 1px; }
.tabs button { padding: 2px 27px 0; }
.tabs button:nth-child(3) { padding: 2px 24px 0; }
.tabs .active { width: 152px; background: linear-gradient(#6a6a6a, #555); border: 1px solid #2b2b2b; border-bottom: 0; color: #dcdcdc; padding: 0; }
.tabs svg { align-self: center; margin-left: 23px; }
.panels { height: 20px; display: flex; padding-left: 1px; background: linear-gradient(#474747, #383838); }
.panels button { padding: 0 5px; border-right: 1px solid #222; box-shadow: inset 1px 0 #555; }

.workspace-grid { flex: 1; min-height: 0; display: grid; grid-template-columns: minmax(0, 1fr) 182px; grid-template-rows: minmax(0, 1fr); }
.left { display: flex; flex-direction: column; min-height: 0; }
.viewport { flex: 1; min-height: 0; position: relative; overflow: hidden; background: #383838; border: 2px solid #6e6424; }
.vplabel { padding: 3px; display: flex; gap: 4px; color: #ddd; font-family: "DejaVu Sans", "Noto Sans CJK SC", sans-serif; font-size: 11px; }
.dim { color: #aaa; }
.scene { position: absolute; left: 0; top: 0; width: 100%; height: 100%; }
.cube { position: absolute; right: 15px; top: 39px; }
.cubetext { font: 17px "Noto Sans CJK SC", sans-serif; fill: #65686b; }
.axes { position: absolute; left: 20px; bottom: 22px; }
.caddy { position: absolute; left: 546px; top: 356px; display: flex; flex-direction: column; align-items: flex-start; gap: 7px; }
.caddytitle { width: 60px; height: 17px; border-radius: 6px; background: rgba(38,36,78,.92); color: #eee; display: flex; align-items: center; padding-left: 7px; }
.caddytitle i { width: 4px; height: 12px; border: 1px solid #888; border-width: 0 1px; margin-right: 5px; }
.pill { width: 73px; height: 22px; border: 1px solid #28284e; border-radius: 11px; background: linear-gradient(rgba(205,205,222,.75), rgba(175,175,212,.8)); display: flex; align-items: center; padding-left: 5px; color: #222; }
.pill input { width: 40px; padding-left: 4px; }
.caddybtns { display: flex; gap: 7px; }
.caddybtns button { width: 22px; height: 22px; border: 1px solid #28284e; border-radius: 50%; background: rgba(203,204,226,.8); }

.slider { height: 19px; flex: none; display: flex; color: #ccc; }
.slider button { width: 16px; border-right: 1px solid #111; border-bottom: 1px solid #111; }
.slider .thumb { width: 125px; border-right: 2px solid #111; border-bottom: 2px solid #111; box-shadow: inset 1px 1px #555; }
.trackbar { height: 26px; flex: none; display: flex; background: linear-gradient(90deg, #444 40px, #2c2c2c 40px); border-top: 1px solid #111; padding-right: 55px; }
.curvebtn { width: 43px; }
.ticks { flex: 1; display: flex; margin-left: 11px; }
.ticks div { flex: 1; background: linear-gradient(90deg, #6e6e6e 1px, transparent 1px) 0 0 / 20% 12px repeat-x; color: #bbb; }
.ticks span { display: block; width: 24px; margin: 11px 0 0 -12px; line-height: 16px; text-align: center; }
.ticks .first span { margin: 0 0 0 -4px; width: 8px; height: 25px; padding-top: 11px; background: #8a8416; color: #e2db42; }

.command { display: flex; flex-direction: column; min-height: 0; padding-left: 7px; background: #444; }
.cmdtabs { height: 28px; flex: none; display: flex; align-items: center; margin-left: -4px; }
.cmdtabs button { width: 29px; height: 26px; border-right: 1px solid #151515; border-bottom: 1px solid #222; }
.cmdtabs .sel { border-bottom-color: #444; }
.namerow { display: flex; gap: 4px; margin: 5px 8px 0 1px; height: 20px; flex: none; }
.namerow input { flex: 1; padding-left: 2px; background: #555; border: 1px solid #181818; border-width: 2px 1px 1px 2px; }
.namerow button { width: 17px; background: #5c5ad6; border: 1px solid #181818; }
.modlist { height: 22px; margin: 6px 7px 0 1px; border: 1px solid #181818; border-width: 2px 0 1px 2px; background: linear-gradient(#444, #444) left / calc(100% - 16px) 100% no-repeat #fff; }
.modbtns { flex: none; display: grid; grid-template-columns: 82px 82px; gap: 2px 3px; margin-top: 7px; }
.modbtns button, .btn { height: 21px; border: 1px solid #333; border-right-color: #161616; border-bottom-color: #161616; overflow: hidden; }
.modbtns button:disabled { color: #161616; }
.stack { height: 127px; flex: none; margin: 7px 8px 0 2px; border: 1px solid #f3f3f3; background: #555; }
.stackrow { display: flex; align-items: center; height: 17px; background: #3d80d8; padding: 0 5px 0 7px; gap: 6px; color: #fff; }
.edgeicon { margin-left: auto; color: #101060; }
.stacktools { height: 32px; flex: none; display: flex; align-items: center; justify-content: space-between; padding: 0 18px 0 9px; }
.stacktools i { width: 1px; height: 16px; background: #111; }
.rollarea { flex: 1; min-height: 0; display: flex; margin: 8px 0 6px -3px; border-top: 2px solid #111; padding-top: 7px; overflow: hidden; }
.rolls { flex: 1; min-width: 0; overflow: hidden; border: 1px solid #1c1c1c; border-width: 1px 0 0 1px; padding: 0 1px 0 3px; }
.scrollbar { width: 9px; flex: none; padding: 0 3px 0 1px; background: linear-gradient(90deg, transparent 1px, #b5b5b5 1px 5px, transparent 5px); }
.scrollbar i { display: block; height: 137px; width: 5px; background: #101010; }
.rollout { border: 1px solid #1c1c1c; margin-top: 11px; padding: 0 4px 0 7px; display: flex; flex-direction: column; }
.rollout h2 { height: 17px; margin: -9px -2px 3px -5px; border: 1px solid #6b6b6b; background: #3f3f3f; color: #eee; text-align: center; line-height: 15px; position: relative; }
.rollout h2 b { position: absolute; left: 4px; }
.subobj { display: flex; align-items: center; height: 22px; margin-bottom: 4px; padding-left: 8px; color: #b81414; }
.subobj button { width: 24px; height: 22px; }
.subobj .sel { background: #ff0; margin-left: 3px; color: #c42b10; }
.check { display: flex; align-items: center; height: 19px; gap: 5px; white-space: nowrap; }
.check input { appearance: none; width: 12px; height: 12px; background: #515151; border: 2px solid #1b1b1b; border-right: 1px solid #333; border-bottom: 1px solid #333; margin-left: 2px; }
.check.off { color: #151515; }
.anglerow { display: flex; align-items: center; }
.angle { width: 67px; height: 17px; margin-left: 9px; background: #505050; border: 1px solid #1b1b1b; padding-left: 3px; color: #151515; }
.spin { width: 12px; height: 17px; border: 1px solid #222; border-left: 0; border-top: 0; margin-left: 2px; }
.pair { display: grid; grid-template-columns: 1fr 1fr; gap: 6px; margin-top: 3px; }
.btn { height: 18px; }
.combo { display: flex; gap: 2px; min-width: 0; }
.combo .btn { flex: 1; }
.combo .set { flex: none; width: 15px; }
.tight { gap: 0; }
fieldset { min-width: 0; border: 1px solid #1b1b1b; margin: 3px -2px 0 -7px; padding: 0 0 5px 3px; height: 40px; display: flex; gap: 10px; align-items: center; }
legend { padding: 0 2px; margin-left: 3px; }
fieldset label { display: flex; align-items: center; gap: 6px; white-space: nowrap; }
fieldset input { appearance: none; width: 9px; height: 9px; border: 1px solid #181818; border-radius: 50%; background: #555; }
fieldset input:checked { background: radial-gradient(#fff 3px, #181818 4px); }
.count { text-align: right; padding: 7px 6px 24px; }
.closed { height: 12px; margin-top: 12px; }
.edges { margin-top: 9px; padding: 0 7px 0 6px; }
.edges h2 { margin: -9px -5px 3px -4px; }
.edges > .btn { margin-top: 5px; }
.edges .pair { margin-top: 5px; }
.edges .shape { justify-content: flex-end; padding-right: 15px; }
.weight { display: flex; justify-content: flex-end; margin: 3px 0; padding: 6px 18px 0 0; border: 1px solid #1b1b1b; }
.weight input { width: 60px; height: 17px; background: #505050; border: 1px solid #1b1b1b; margin-right: 4px; }

.status { height: 49px; flex: none; display: flex; padding-top: 3px; gap: 3px; background: #444; white-space: nowrap; }
.listener { width: 104px; padding-left: 1px; flex: none; display: flex; flex-direction: column; gap: 2px; padding-right: 5px; border-right: 1px solid #222; }
.listener output, .listener input { height: 21px; width: 97px; border: 1px solid #eee; border-left: 2px solid #888; border-top: 2px solid #888; background: #dec4c6; }
.listener input { background: #fff; color: #000; height: 23px; padding-left: 3px; font-family: "Liberation Mono", "Noto Sans CJK SC", monospace; }
.prompts { flex: 1; min-width: 0; display: flex; flex-direction: column; gap: 2px; padding-top: 2px; }
.prow { display: flex; align-items: center; height: 22px; }
.well { height: 22px; line-height: 22px; padding: 0 5px; border: 1px solid #222; border-right-color: #3a3a3a; border-bottom-color: #555; display: block; text-align: left; }
.grow { flex: 1; overflow: hidden; }
.prow > button { width: 26px; }
.prow label { display: flex; align-items: center; gap: 2px; margin-right: 13px; }
.prow label input { width: 57px; height: 20px; background: #555; border: 2px solid #181818; border-right: 1px solid #444; border-bottom: 1px solid #444; }
.prow .degrade { width: 20px; height: 22px; background: #3d80d8; border: 1px solid #111; }
.gridcol, .autocol { display: flex; flex-direction: column; gap: 2px; flex: none; width: 101px; padding-top: 2px; }
.keybtn { width: 42px; border: 1px solid #1b1b1b; border-top-color: #444; border-left-color: #444; }
.autocol { width: 66px; }
.autocol button { height: 21px; border: 1px solid #444; border-right-color: #161616; border-bottom-color: #161616; }
.filtercol { width: 116px; flex: none; display: flex; flex-direction: column; gap: 2px; padding-top: 1px; }
.seldrop { height: 21px; background: #e8e8e8; color: #000; border: 1px solid #111; }
.filterrow { display: flex; align-items: center; gap: 5px; height: 22px; margin-left: 2px; }
.playcol { display: flex; flex-direction: column; justify-content: flex-end; flex: none; width: 104px; padding-bottom: 1px; }
.playrow { display: flex; align-items: center; height: 22px; justify-content: flex-end; }
.playrow input { width: 62px; height: 20px; background: #505050; border: 2px solid #181818; border-right: 1px solid #333; border-bottom: 1px solid #333; margin-left: 8px; }
.navgrid { display: grid; grid-template-columns: 20px 20px 24px 22px 22px; grid-auto-rows: 22px; width: 110px; flex: none; margin-right: 4px; }

.overlay { position: absolute; right: 0; bottom: 0; pointer-events: none; }
.brand { position: absolute; left: 0; top: 22px; width: 235px; height: 115px; background: #213055; color: #d7dbe3; display: flex; align-items: center; padding-left: 13px; gap: 15px; }
.brand div { display: flex; flex-direction: column; }
.brand strong { font: bold 36px/36px "Noto Sans CJK SC", sans-serif; }
.brand span { font: 17px/22px "DejaVu Sans", sans-serif; }
```
